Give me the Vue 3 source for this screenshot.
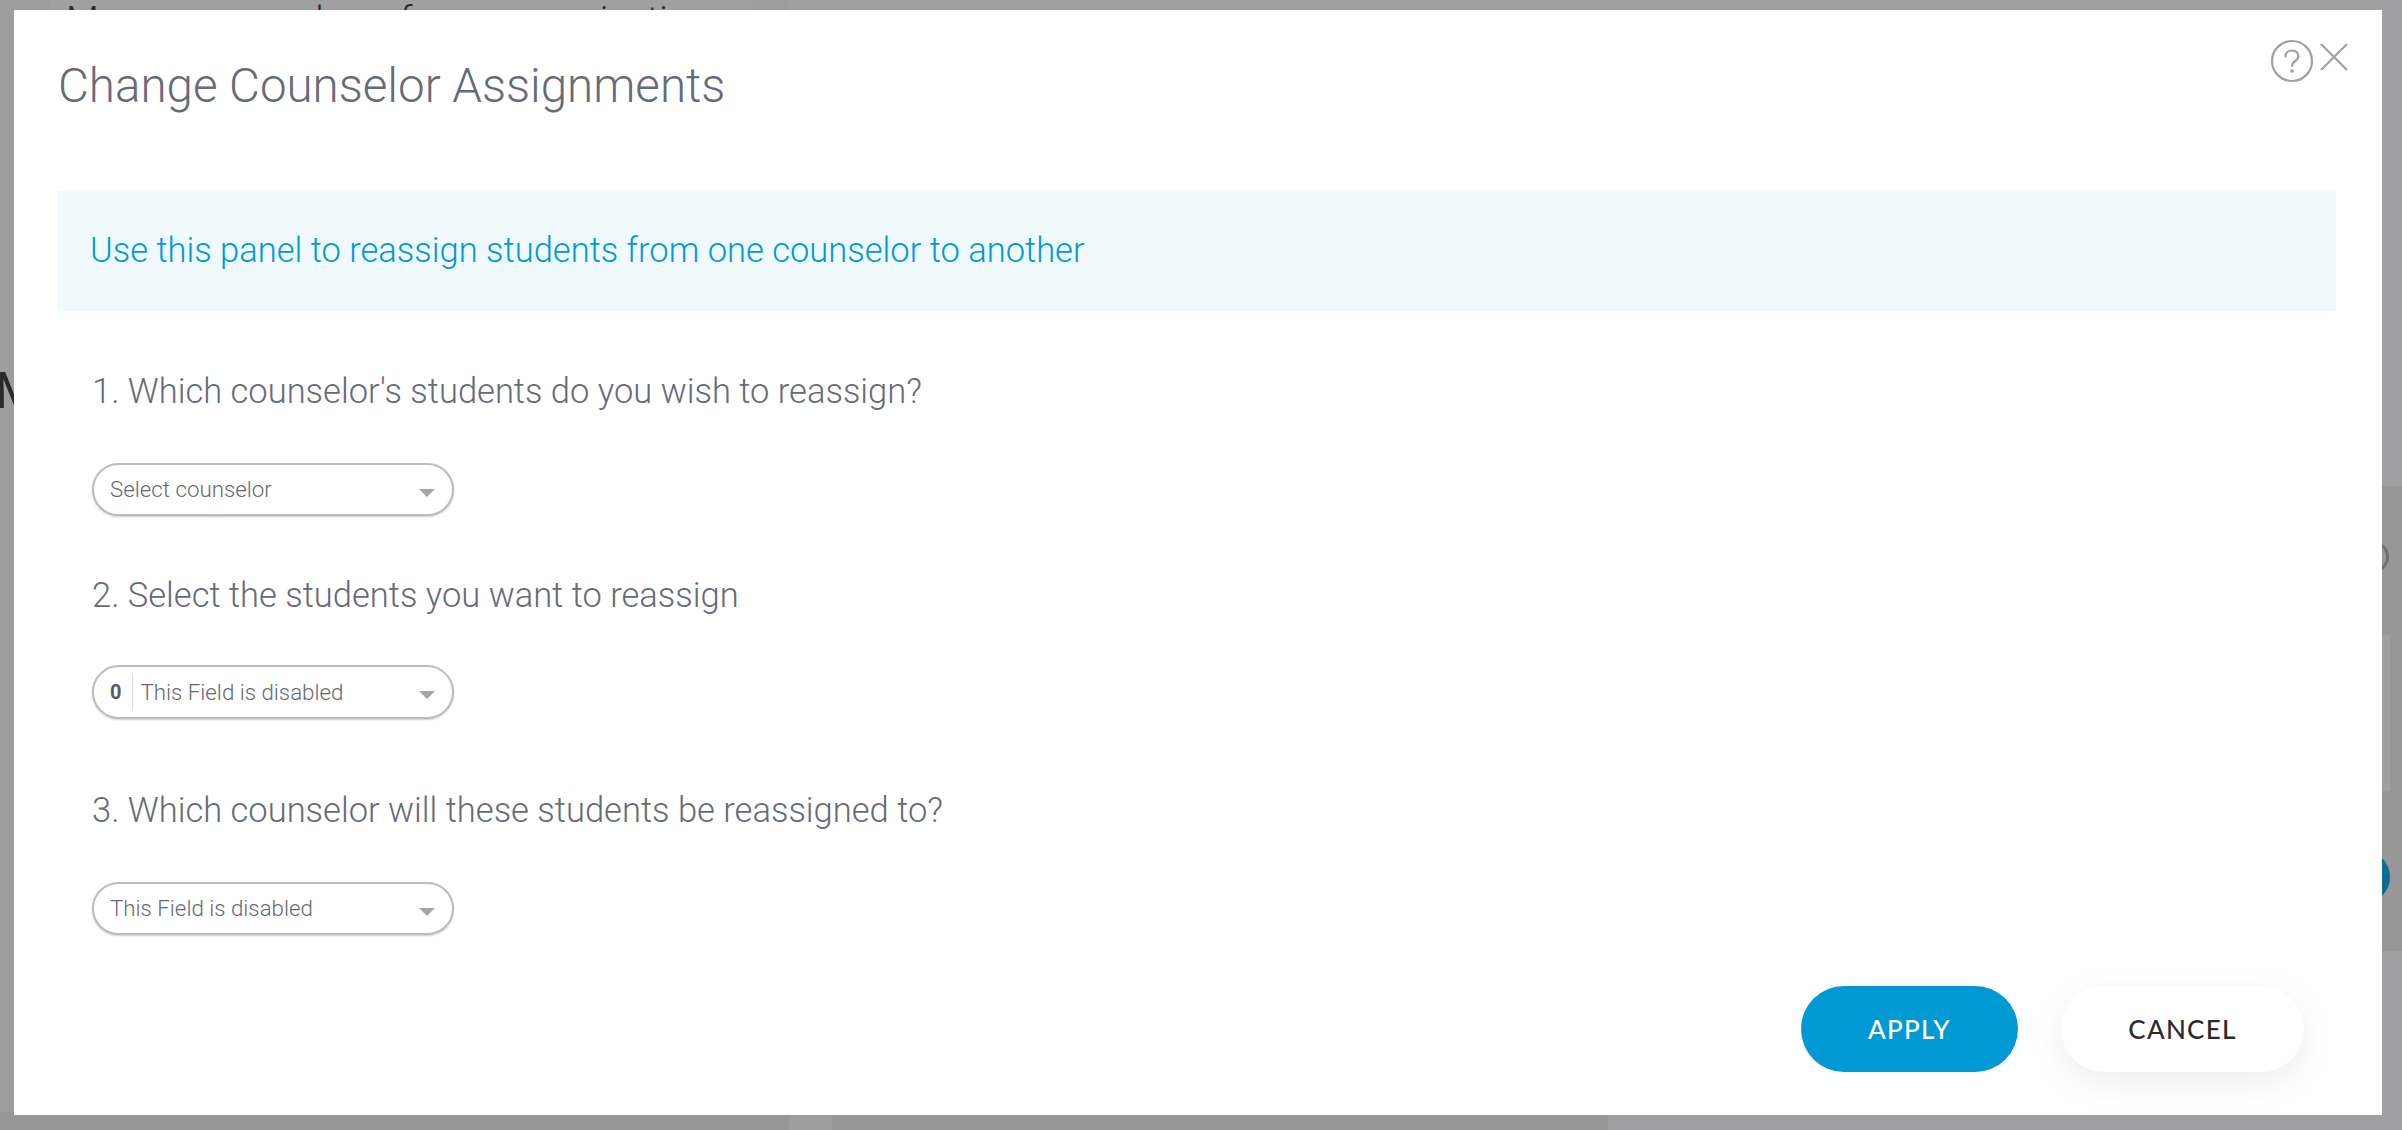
<script setup>
const steps = [
  { q: '1. Which counselor\'s students do you wish to reassign?', label: 'Select counselor', cls: 's1' },
  { q: '2. Select the students you want to reassign', label: 'This Field is disabled', count: '0', cls: 's2' },
  { q: '3. Which counselor will these students be reassigned to?', label: 'This Field is disabled', cls: 's3' },
]
</script>

<template>
  <div class="page">
    <div class="backdrop">
      <div class="band band-left"></div>
      <div class="band band-top"></div>
      <div class="band band-right"></div>
      <div class="band band-bottom"></div>
      <div class="band band-bottom-light"></div>
      <div class="panel-right"></div>
      <div class="ring"></div>
      <div class="blue-dot"></div>
      <div class="bg-heading">Manage a number of your organization</div>
      <div class="bg-letter">M</div>
    </div>
    <div class="modal">
      <div class="tools">
        <svg class="help" width="44" height="44" viewBox="0 0 44 44" fill="none" stroke="#a0a0a0" stroke-width="2.2">
          <circle cx="22" cy="22" r="20" />
          <path d="M15.5 17.5c0-3.6 2.9-6 6.5-6s6.5 2.4 6.5 5.6c0 2.4-1.3 3.6-3.2 4.9-2 1.4-3.1 2.4-3.1 5" stroke-width="2.2" stroke-linecap="round" />
          <circle cx="22" cy="32" r="1.8" fill="#a0a0a0" stroke="none" />
        </svg>
        <svg class="close" width="28" height="28" viewBox="0 0 28 28" fill="none" stroke="#a0a0a0" stroke-width="2.2">
          <path d="M1 1l26 26M27 1L1 27" />
        </svg>
      </div>
      <h1 class="title">Change Counselor Assignments</h1>
      <div class="banner">Use this panel to reassign students from one counselor to another</div>
      <div class="steps">
        <div v-for="s in steps" :key="s.cls" class="step" :class="s.cls">
          <div class="question">{{ s.q }}</div>
          <div class="select">
            <template v-if="s.count">
              <span class="count">{{ s.count }}</span>
              <span class="divider"></span>
            </template>
            <span class="label">{{ s.label }}</span>
            <span class="arrow"></span>
          </div>
        </div>
      </div>
      <div class="actions">
        <button class="btn apply">APPLY</button>
        <button class="btn cancel">CANCEL</button>
      </div>
    </div>
  </div>
</template>

<style>
html, body { margin: 0; padding: 0; overflow: hidden; }
</style>

<style scoped>
.page {
  position: relative;
  width: 2402px;
  height: 1130px;
  overflow: hidden;
  background: #a0a0a2;
  font-family: Roboto, "Liberation Sans", sans-serif;
}
.backdrop { position: absolute; inset: 0; overflow: hidden; }
.band { position: absolute; }
.band-left { left: 0; top: 0; width: 50px; height: 1130px; background: #9d9d9e; }
.band-top { left: 752px; top: 0; width: 36px; height: 12px; background: #9c9c9d; }
.band-right { left: 2370px; top: 486px; width: 32px; height: 465px; background: #979798; }
.band-bottom { left: 0; top: 1112px; width: 1608px; height: 18px; background: #979798; }
.band-bottom-light { left: 789px; top: 1112px; width: 43px; height: 18px; background: #9e9e9f; }
.panel-right { position: absolute; left: 2370px; top: 635px; width: 20px; height: 156px; background: #9f9fa0; }
.ring {
  position: absolute; left: 2357px; top: 541px;
  width: 26px; height: 26px;
  border: 3px solid #707071; border-radius: 50%;
}
.blue-dot {
  position: absolute; left: 2336px; top: 850px; width: 54px; height: 54px;
  border-radius: 50%; background: #0d6c96;
}
.bg-heading {
  position: absolute; left: 66px; top: -1px; white-space: nowrap;
  font-size: 38px; font-weight: 300; color: #2b2b2d; line-height: 44px;
}
.bg-letter {
  position: absolute; left: -5px; top: 361px;
  font-size: 50px; font-weight: 400; line-height: 60px; color: #2b2b2d;
}
.modal {
  position: absolute;
  left: 14px; top: 10px; width: 2368px; height: 1105px;
  box-sizing: border-box;
  background: #fff;
  padding: 49px 46px 0 44px;
  display: flex;
  flex-direction: column;
}
.tools { position: absolute; left: 2256px; top: 29px; display: flex; gap: 6px; }
.close { margin-top: 4px; }
.title {
  margin: 0 0 78px 0;
  font-size: 47.5px; font-weight: 300; line-height: 54px; color: #666b78;
}
.banner {
  height: 120px; box-sizing: border-box; display: flex; align-items: center;
  padding: 0 0 2px 32px;
  background: #f0f9fc; color: #0099d4;
  font-size: 34.5px; font-weight: 300;
}
.steps { padding-left: 34px; display: flex; flex-direction: column; }
.question {
  font-size: 34.5px; font-weight: 300; line-height: 44px; color: #666b78;
}
.s1 .question { margin-top: 58px; margin-bottom: 50px; }
.s2 .question { margin-top: 57px; margin-bottom: 48px; }
.s3 .question { margin-top: 69px; margin-bottom: 50px; }
.select {
  width: 362px; height: 53px; box-sizing: border-box;
  display: flex; align-items: center;
  padding: 0 17px 0 16px;
  border: 2px solid #bdbdbd; border-radius: 27px;
  box-shadow: 0 1px 2px rgba(0,0,0,.2);
  font-size: 22.3px; font-weight: 300; color: #66696f;
  background: #fff;
}
.s1 .label, .s3 .label { padding-bottom: 2px; }
.s2 .select { height: 54px; }
.count { font-weight: 700; color: #555c66; font-size: 20px; }
.divider { width: 1px; height: 36px; background: #ddd; margin: 0 7px 0 11px; }
.label { flex: 1; }
.arrow {
  width: 0; height: 0; margin-top: 6px;
  border-left: 8px solid transparent; border-right: 8px solid transparent;
  border-top: 8px solid #a6a6a6;
}
.actions {
  display: flex; justify-content: flex-end; gap: 43px;
  margin-top: 51px; padding-right: 32px;
}
.btn {
  height: 86px; border: 0; border-radius: 43px; padding: 0;
  font-family: Lato, sans-serif; font-size: 26px; font-weight: 500; letter-spacing: 1.3px;
}
.apply { width: 217px; background: #0099d4; color: #fff; }
.cancel { width: 243px; background: #fff; color: #2b2b2d; box-shadow: 0 10px 36px rgba(0,0,0,.07); }
</style>
